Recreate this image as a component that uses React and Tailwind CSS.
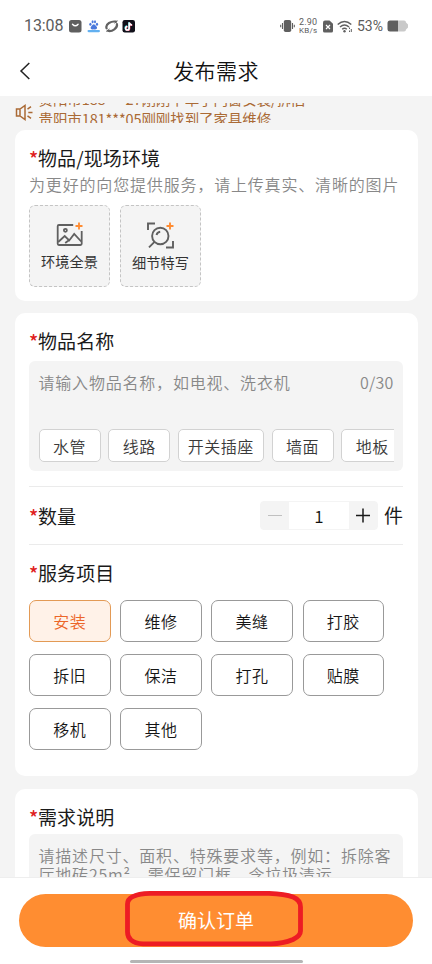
import React from 'react';

const services = ['安装', '维修', '美缝', '打胶', '拆旧', '保洁', '打孔', '贴膜', '移机', '其他'];
const tags = [
  ['水管', 'w-[62px]'],
  ['线路', 'w-[62px]'],
  ['开关插座', 'w-[86px]'],
  ['墙面', 'w-[62px]'],
  ['地板', 'w-[62px]'],
];

function Heading({ children }) {
  return (
    <h2 className="flex h-7 items-center whitespace-nowrap text-[19px] font-normal leading-7 tracking-[0.1px] text-[#1a1a1a]">
      <span className="w-[9px] font-medium text-[#e02020]">*</span>
      {children}
    </h2>
  );
}

function StatusBar() {
  return (
    <div className="flex h-[52px] items-center pl-6 pr-[24px] font-normal text-[#5c5c5c]">
      <span className="w-[45px] font-[Roboto] text-[16px] tracking-[-0.1px]">13:08</span>
      <svg className="h-[13px] w-[66px]" viewBox="0 0 66 13">
        <rect x="0" y="0" width="12.5" height="12.5" rx="2.5" fill="#5f5f5f" />
        <path d="M3.5 4.2Q6.3 7.4 9.1 4.2" fill="none" stroke="#fff" strokeWidth="1.4" strokeLinecap="round" />
        <g fill="#4a78dc">
          <ellipse cx="21.4" cy="4.3" rx="1.1" ry="1.5" />
          <ellipse cx="23.6" cy="1.8" rx="1" ry="1.5" />
          <ellipse cx="26" cy="1.8" rx="1" ry="1.5" />
          <ellipse cx="28" cy="4.3" rx="1.1" ry="1.5" />
          <path d="M24.8 4.2q1.2 0 2 1.6 2 1.4 1 3-1.2 1-3 .5-2 .5-3-.5-.8-1.6 1-3 .8-1.6 2-1.6z" />
          <rect x="18.5" y="10" width="12.5" height="2.2" rx="1.1" fill="#62b0f0" />
        </g>
        <g fill="none" stroke="#626262" strokeLinecap="round">
          <path d="M37.6 8.3C36 4 42.5 .8 47 1.7" strokeWidth="2.2" />
          <path d="M47.9 4C49 8 43 12 38.8 10.8" strokeWidth="2.2" />
          <path d="M37.6 11.2L40.3 9.2M48.3 1L45.8 3" strokeWidth="1" />
        </g>
        <rect x="53.5" y="0" width="12.5" height="12.5" rx="2.2" fill="#11101a" />
        <g fill="none" strokeWidth="1.5">
          <path d="M60.2 2.5v5.7a1.8 1.8 0 1 1-1.8-1.8M60.2 2.5q.4 2.3 2.8 2.5" stroke="#3cd9dc" transform="translate(-.4 -.3)" />
          <path d="M60.2 2.5v5.7a1.8 1.8 0 1 1-1.8-1.8M60.2 2.5q.4 2.3 2.8 2.5" stroke="#f0426a" transform="translate(.4 .3)" />
          <path d="M60.2 2.5v5.7a1.8 1.8 0 1 1-1.8-1.8M60.2 2.5q.4 2.3 2.8 2.5" stroke="#fff" />
        </g>
      </svg>
      <svg className="ml-auto h-[14px] w-[15px]" viewBox="0 0 15 14">
        <rect x="3.8" y="1" width="7.4" height="12" rx="1.8" fill="#5f5f5f" />
        <path d="M2.5 4v6M12.5 4v6M.7 5.8v2.4M14.3 5.8v2.4" stroke="#5f5f5f" strokeWidth="1.1" />
      </svg>
      <span className="ml-[4px] flex w-5 flex-col font-[Roboto] text-[8px] leading-[8px]">
        <span className="text-[9px] leading-[9px] tracking-[0.2px]">2.90</span>
        <span className="tracking-[0.2px]">KB/s</span>
      </span>
      <svg className="ml-[4px] h-[13px] w-[10px]" viewBox="0 0 10 13">
        <path d="M2 .5h4.5L10 3.800V11q0 1.500-1.500 1.500h-7Q0 12.500 0 11V2.500Q0 .5 2 .5z" fill="#5f5f5f" />
        <path d="M3 5l4 4M7 5L3 9" stroke="#fff" strokeWidth="1.2" />
      </svg>
      <svg className="ml-[4px] h-[13px] w-[16px]" viewBox="0 0 16 13">
        <g fill="none" stroke="#5f5f5f" strokeWidth="1.5">
          <path d="M.7 4.500Q7.500-1.500 14.300 4.500M3 7Q7.500 3 12 7M5.200 9.300Q7.500 7.300 9.800 9.300" />
        </g>
        <circle cx="7.5" cy="11.3" r="1.2" fill="#5f5f5f" />
        <path d="M12.500 9V7.500M14.300 9v3M12.500 10.500v1.500" stroke="#5f5f5f" strokeWidth="1" />
      </svg>
      <span className="ml-[4px] w-[27px] font-[Roboto] text-[14px]">53%</span>
      <svg className="ml-[3px] h-[12px] w-[21px]" viewBox="0 0 21 12">
        <path d="M3 .5h14q2 0 2 2l2 2v3l-2 2q0 2-2 2H11V.5z" fill="#c9c9c9" />
        <path d="M11 .5v11H3q-2.500 0-2.500-2.500V3Q.5.5 3 .5z" fill="#5f5f5f" />
      </svg>
    </div>
  );
}

function PanoramaIcon() {
  return (
    <svg className="h-[26px] w-[28px]" viewBox="1.3 0.5 28 26" fill="none" stroke="#606060" strokeWidth="1.8">
      <path d="M18.500 3.500H4.200q-1.200 0-1.200 1.200v17.600q0 1.200 1.200 1.200h21.600q1.200 0 1.200-1.200V9.500" />
      <circle cx="10.7" cy="8.8" r="1.5" />
      <path d="M3.500 20.500l6.500-6 4.500 4.500 5-6.500 7 7.500M10.500 21.500l4-3" />
      <path d="M24.300 1v7M20.800 4.500h7" stroke="#ff8c32" />
    </svg>
  );
}

function DetailIcon() {
  return (
    <svg className="h-[28px] w-[28px]" viewBox="1 0.5 28 28" fill="none" stroke="#606060" strokeWidth="1.9">
      <path d="M2 8.500V2h7M27 19.500V26h-7" />
      <circle cx="14.3" cy="14.5" r="8.2" />
      <path d="M8.500 20.300l-5.500 5.500M10.500 13.500q.8-2.800 3.700-3.200" />
      <path d="M24 1v7M20.500 4.500h7" stroke="#ff8c32" />
    </svg>
  );
}

export default function App() {
  return (
    <div className="relative flex h-[964px] w-[432px] flex-col overflow-hidden bg-[#f4f4f4] font-['Noto_Sans_CJK_SC',sans-serif] font-[350]">
      <header className="h-24 shrink-0 bg-white">
        <StatusBar />
        <div className="flex h-[38px] items-center">
          <svg className="ml-[19px] h-5 w-3" viewBox="0 0 12 20" fill="none" stroke="#222" strokeWidth="1.5">
            <path d="M10.300 2L2 10l8.300 8" />
          </svg>
          <h1 className="flex-1 pr-[31px] text-center text-[21px] font-[350] tracking-[0.4px] text-[#111]">发布需求</h1>
        </div>
      </header>

      <main className="min-h-0 flex-1 overflow-hidden px-[14.5px]">
        <div className="flex h-[34px] text-[#aa6a35]">
          <svg className="mt-[8px] h-[17px] w-[18px]" viewBox="0 0 18 17" fill="none" stroke="#aa6a35" strokeWidth="1.5">
            <path d="M5 5H1.500v7H5l5 3.500V1.500zM5 5v7M12.500 5.200l3.500-2.500M13.300 8.500H17.500M12.500 11.800l3.500 2.500" />
          </svg>
          <div className="ml-[6px] mt-[7px] h-[19.5px] flex-1 overflow-hidden whitespace-nowrap text-[14.5px] font-normal leading-[20px]">
            <p className="-mt-[14px] tracking-[-0.1px]">贵阳市188***27刚刚下单了门窗安装/拆旧</p>
            <p className="tracking-[-0.1px]">贵阳市181***05刚刚找到了家具维修</p>
          </div>
        </div>

        <section className="h-[171px] rounded-[10px] bg-white px-[14.5px] pt-[14px]">
          <Heading>物品/现场环境</Heading>
          <p className="h-[25px] whitespace-nowrap text-[16px] leading-[25px] tracking-[0.83px] text-[#888]">为更好的向您提供服务，请上传真实、清晰的图片</p>
          <div className="mt-2 flex gap-[10px] text-[14.2px] font-normal leading-5 text-[#333]">
            <div className="flex h-[82px] w-[81px] flex-col items-center rounded-md border border-dashed border-[#c4c4c4] bg-[#f4f4f4] pt-4">
              <PanoramaIcon />
              <span className="mt-[3px]">环境全景</span>
            </div>
            <div className="flex h-[82px] w-[81px] flex-col items-center rounded-md border border-dashed border-[#c4c4c4] bg-[#f4f4f4] pt-4">
              <DetailIcon />
              <span className="mt-[2px]">细节特写</span>
            </div>
          </div>
        </section>

        <section className="mt-3 h-[463px] rounded-[10px] bg-white px-[14.5px] pt-[14px]">
          <Heading>物品名称</Heading>
          <div className="mt-[6px] h-[110px] rounded-md bg-[#f4f4f4] px-[9.5px] pt-2">
            <div className="flex h-[26px] items-center justify-between text-[16px] text-[#888]">
              <span className="tracking-[0.8px]">请输入物品名称，如电视、洗衣机</span>
              <span className="tracking-[0.2px]">0/30</span>
            </div>
            <div className="mt-[34px] flex gap-[7.7px] overflow-hidden">
              {tags.map(([label, width]) => (
                <span key={label} className={`${width} flex h-[33px] shrink-0 items-center justify-center rounded-[5px] border border-[#d2d2d2] bg-white text-[16px] tracking-[0.5px] text-[#3a3a3a]`}>{label}</span>
              ))}
            </div>
          </div>
          <div className="mt-[15px] flex h-[59px] items-center border-y border-[#ebebeb]">
            <Heading>数量</Heading>
            <div className="ml-auto flex h-[29px] w-[118px] overflow-hidden rounded-[4px] border border-[#f4f4f4] bg-[#f4f4f4]">
              <span className="flex w-7 items-center justify-center"><i className="h-px w-[14px] bg-[#c0c0c0]" /></span>
              <span className="flex flex-1 items-center justify-center bg-white text-[17px] text-[#111]">1</span>
              <svg className="h-[27px] w-7" viewBox="0 0 28 27" stroke="#1a1a1a" strokeWidth="1.5"><path d="M7 13.500h14M14 6.500v14" /></svg>
            </div>
            <span className="ml-[6px] text-[19px] font-normal text-[#1a1a1a]">件</span>
          </div>
          <div className="mt-[14px]"><Heading>服务项目</Heading></div>
          <div className="mt-[13px] grid grid-cols-[repeat(4,81.5px)] gap-x-[9.7px] gap-y-3">
            {services.map((name, i) => (
              <button key={name} className={`h-[42px] rounded-[7px] border text-[16px] tracking-[0.5px] ${i === 0 ? 'border-[#e39a55] bg-[#fff2e8] text-[#ec6628]' : 'border-[#999] bg-white text-[#151515]'}`}>{name}</button>
            ))}
          </div>
        </section>

        <section className="mt-[13px] h-[200px] rounded-[10px] bg-white px-[14.5px] pt-[14px]">
          <Heading>需求说明</Heading>
          <div className="mt-[3px] h-[120px] rounded-md bg-[#f4f4f4] px-[9.5px] pt-[12px] text-[16px] leading-[19px] tracking-[0.8px] text-[#888]">
            <p className="whitespace-nowrap">请描述尺寸、面积、特殊要求等，例如：拆除客</p>
            <p className="whitespace-nowrap">厅地砖25m²，需保留门框，含垃圾清运</p>
          </div>
        </section>
      </main>

      <footer className="flex h-[87px] shrink-0 flex-col items-center border-t border-[#eeeeee] bg-white pt-4">
        <button className="h-[53px] w-[394px] rounded-full bg-[#ff8d31] text-[19px] font-normal text-white">确认订单</button>
        <span className="mt-[13px] h-[3px] w-[173px] rounded-full bg-[#b5b5b5]" />
      </footer>

      <svg className="absolute left-[125px] top-[890px] h-[57px] w-[179px]" viewBox="0 0 179 57" fill="none" stroke="#ed1c24" strokeWidth="4.8" strokeLinejoin="round">
        <path d="M25 3.300H144Q160 3.800 168 7Q175.500 10 175.500 17V41Q175.500 46 168 49.500Q158 53.800 146 53.800H18Q10 53.500 6 50Q2.500 47 2.500 42V14Q2.500 4 25 3.300z" />
      </svg>
    </div>
  );
}
